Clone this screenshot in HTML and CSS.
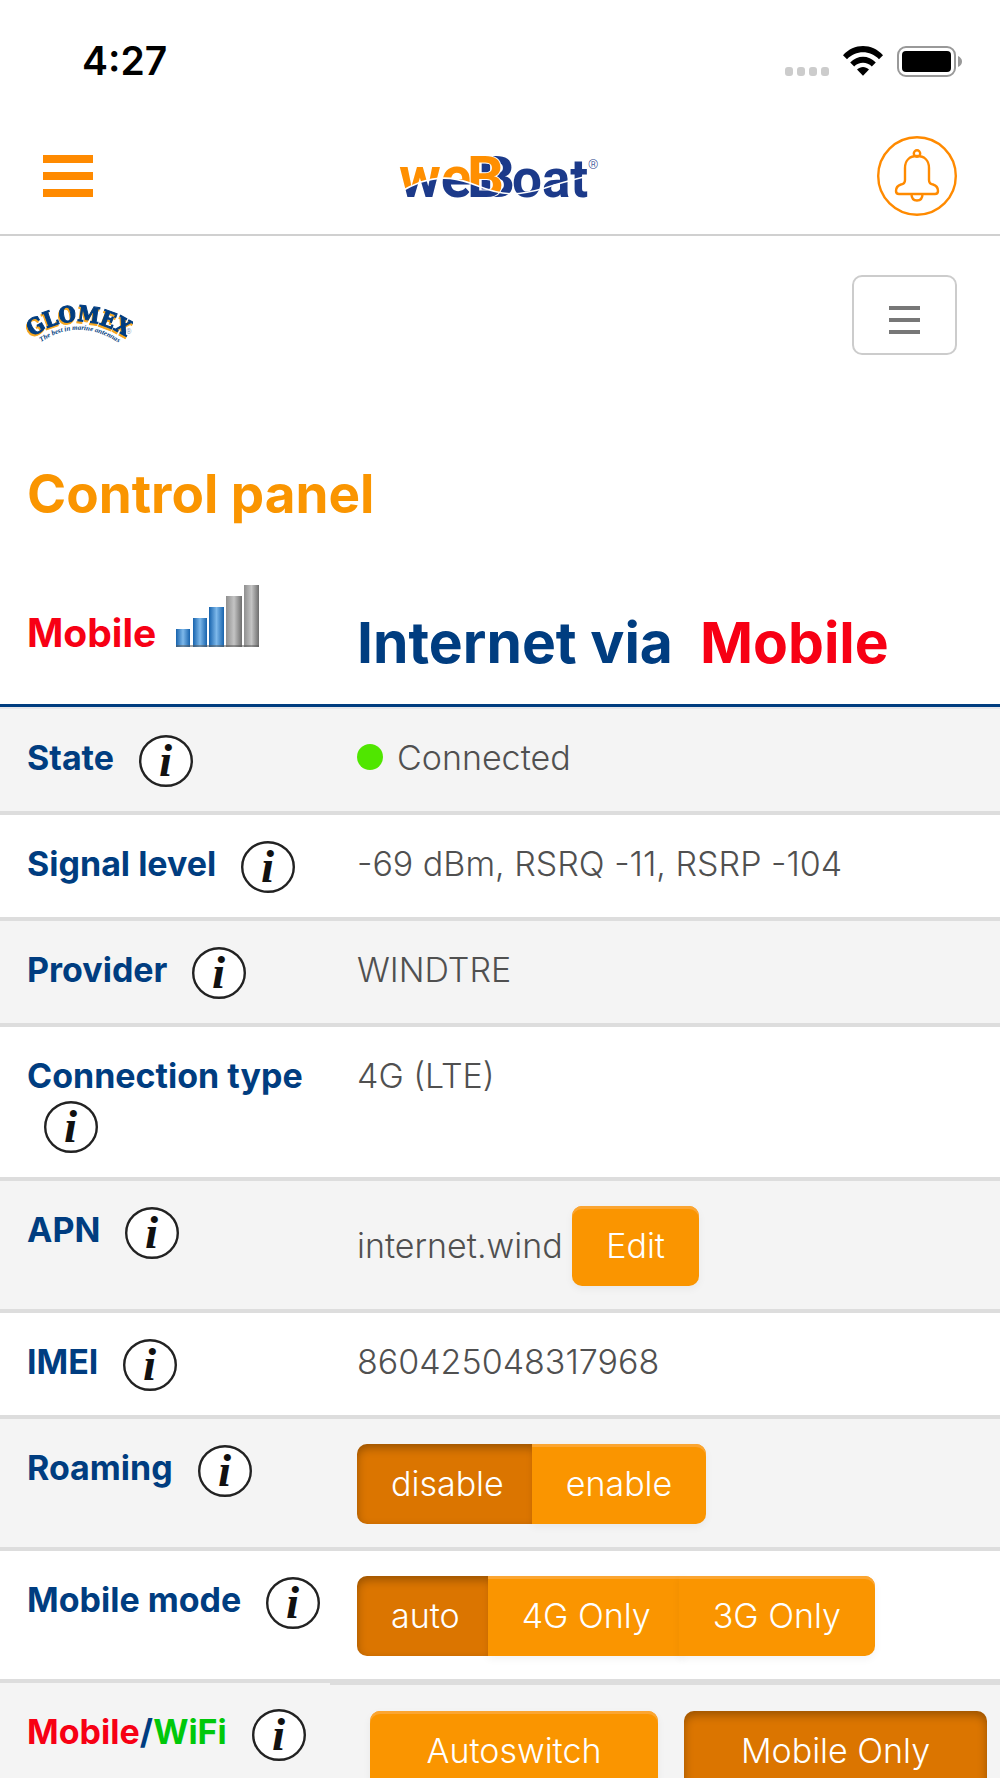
FILE: index.html
```html
<!DOCTYPE html>
<html lang="en">
<head>
<meta charset="utf-8">
<meta name="viewport" content="width=device-width, initial-scale=1">
<title>weBBoat - Control panel</title>
<link rel="stylesheet" href="styles.css">
</head>
<body>
<svg width="0" height="0" class="defs" aria-hidden="true">
  <symbol id="info" viewBox="0 0 54 52">
    <ellipse cx="27" cy="26" rx="25.8" ry="24.8" fill="#fff" stroke="#222" stroke-width="2.4"/>
    <text x="20" y="41" font-family="Liberation Serif, serif" font-size="47" font-weight="700" font-style="italic" fill="#111">i</text>
  </symbol>
</svg>

<div class="status">
  <span class="time">4:27</span>
  <div class="indicators">
    <span class="dots"><i></i><i></i><i></i><i></i></span>
    <svg width="40" height="30" viewBox="0 0 40 30" aria-label="WiFi">
      <path d="M0 9.2C11-3 29-3 40 9.2L36 13.2C27 4 13 4 4 13.2Z"/>
      <path d="M7.2 16.6C14.5 8.800 25.500 8.800 32.800 16.600L28.800 20.600C24 15.600 16 15.600 11.200 20.600Z"/>
      <path d="M14 23.600C17.500 20 22.500 20 26 23.600L20 29.800Z"/>
    </svg>
    <svg width="65" height="31" viewBox="0 0 65 31" aria-label="Battery">
      <rect x="1" y="1" width="57" height="29" rx="8" fill="#fff" stroke="#999" stroke-width="2"/>
      <rect x="5" y="5" width="49" height="21" rx="4"/>
      <path d="M61 10Q65 12 65 15.500Q65 19 61 21Z" fill="#999"/>
    </svg>
  </div>
</div>

<header class="appbar">
  <button class="burger" aria-label="Menu"><i></i><i></i><i></i></button>
  <svg class="logo" width="204" height="52" viewBox="0 0 204 52" aria-label="weBBoat">
    <defs>
      <pattern id="wave" patternUnits="userSpaceOnUse" width="204" height="52">
        <rect width="204" height="52" fill="#1c3a8a"/>
        <path d="M0 0H104V44Q97 42 80 36C60 28 45 25 23 32Q12 36 0 43Z" fill="#ff8f00"/>
      </pattern>
    </defs>
    <g font-family="Roboto, sans-serif" font-weight="700" fill="#1c3a8a">
      <text x="80" y="47" font-size="58">B</text>
      <text x="1" y="47" font-size="57" fill="url(#wave)">we</text>
      <text x="69" y="47" font-size="58" fill="url(#wave)" stroke="#fff" stroke-width="2" paint-order="stroke">B</text>
      <text x="114" y="47" font-size="53">oat</text>
    </g>
    <path d="M0 43Q12 36 23 32C45 25 60 28 80 36C105 46 120 46 147 38Q165 32 190 26" fill="none" stroke="#fff" stroke-width="1.600"/>
    <text x="190" y="19" font-size="13" font-family="Roboto, sans-serif" fill="#1c3a8a">®</text>
  </svg>
  <button class="bell" aria-label="Notifications">
    <svg width="80" height="80" viewBox="0 0 80 80" fill="none" stroke="#ff8a00" stroke-width="2.4">
      <circle cx="40" cy="40" r="38.800"/>
      <circle cx="40" cy="17.500" r="3.200"/>
      <path d="M28 44V32C28 24 33 20 40 20S52 24 52 32V44Q52 48 56 48.500Q61 50 61 55Q61 58 58 58H22Q19 58 19 55Q19 50 24 48.500Q28 48 28 44Z"/>
      <path d="M34.500 58Q34.500 64.500 40 64.500T45.500 58"/>
    </svg>
  </button>
</header>

<main>
  <nav class="brandbar">
    <svg width="108" height="58" viewBox="0 0 108 58" aria-label="Glomex">
      <path id="arc" d="M7 51Q52 20 101 51" fill="none"/>
      <path id="arc2" d="M16 56Q54 31 94 57" fill="none"/>
      <g class="glomex"><text font-family="DejaVu Serif Condensed, DejaVu Serif, serif" font-weight="700" font-size="22" fill="#003d80" stroke="#003d80"><textPath href="#arc">GLOMEX</textPath></text></g>
      <text font-family="Liberation Serif, serif" font-style="italic" font-weight="700" font-size="7" fill="#003d80"><textPath href="#arc2">The best in marine antennas</textPath></text>
      <text x="101" y="48" font-size="7" font-family="Roboto, sans-serif" fill="#6d8fb8">®</text>
    </svg>
    <button class="toggle" aria-label="Toggle navigation"><i></i><i></i><i></i></button>
  </nav>

  <h1>Control panel</h1>

  <table>
    <colgroup><col class="names"><col></colgroup>
    <thead>
      <tr>
        <th scope="col"><span class="red">Mobile</span>
          <svg class="bars" width="83" height="62" viewBox="0 0 83 62" aria-label="Signal 3 of 5">
            <defs>
              <linearGradient id="b"><stop offset="0" stop-color="#1763ad"/><stop offset=".5" stop-color="#7db8ea"/><stop offset="1" stop-color="#1763ad"/></linearGradient>
              <linearGradient id="g"><stop offset="0" stop-color="#8f8f8f"/><stop offset=".5" stop-color="#c4c4c4"/><stop offset="1" stop-color="#6e6e6e"/></linearGradient>
            </defs>
            <path d="M0 44H14V62H0Z" fill="url(#b)"/><path d="M17 33H31V62H17Z" fill="url(#b)"/><path d="M33 22H48V62H33Z" fill="url(#b)"/>
            <path d="M50 11H66V62H50Z" fill="url(#g)"/><path d="M68 0H83V62H68Z" fill="url(#g)"/>
            <path d="M0 60H83V62H0Z" fill="#555" opacity=".5"/>
          </svg>
        </th>
        <th scope="col" class="via">Internet via&nbsp; <span class="red">Mobile</span></th>
      </tr>
    </thead>
    <tbody>
      <tr><th scope="row">State <button class="info" aria-label="About state"><svg><use href="#info"/></svg></button></th>
        <td><span class="dot"></span>Connected</td></tr>
      <tr><th scope="row">Signal level <button class="info" aria-label="About signal level"><svg><use href="#info"/></svg></button></th>
        <td>-69 dBm, RSRQ -11, RSRP -104</td></tr>
      <tr><th scope="row">Provider <button class="info" aria-label="About provider"><svg><use href="#info"/></svg></button></th>
        <td>WINDTRE</td></tr>
      <tr><th scope="row">Connection type <button class="info" aria-label="About connection type"><svg><use href="#info"/></svg></button></th>
        <td>4G (LTE)</td></tr>
      <tr><th scope="row">APN <button class="info" aria-label="About APN"><svg><use href="#info"/></svg></button></th>
        <td class="actions">internet.wind <button class="btn">Edit</button></td></tr>
      <tr><th scope="row">IMEI <button class="info" aria-label="About IMEI"><svg><use href="#info"/></svg></button></th>
        <td>860425048317968</td></tr>
      <tr><th scope="row">Roaming <button class="info" aria-label="About roaming"><svg><use href="#info"/></svg></button></th>
        <td class="actions"><div class="group"><button class="btn active">disable</button><button class="btn">enable</button></div></td></tr>
      <tr><th scope="row">Mobile mode <button class="info" aria-label="About mobile mode"><svg><use href="#info"/></svg></button></th>
        <td class="actions"><div class="group"><button class="btn active">auto</button><button class="btn">4G Only</button><button class="btn">3G Only</button></div></td></tr>
      <tr><th scope="row"><span class="red">Mobile</span>/<span class="green">WiFi</span> <button class="info" aria-label="About mobile and WiFi"><svg><use href="#info"/></svg></button></th>
        <td class="switch"><div class="pair"><button class="btn">Autoswitch</button><button class="btn active">Mobile Only</button></div></td></tr>
    </tbody>
  </table>
</main>
</body>
</html>
```
FILE: styles.css
```css
* { box-sizing: border-box; }

body {
  margin: 0;
  height: 100vh;
  display: flex;
  flex-direction: column;
  background: #fff;
  color: #505050;
  font: 300 34px/48px Inter, sans-serif;
}

button {
  border: 0;
  padding: 0;
  background: none;
  font: inherit;
  cursor: pointer;
}

.defs { position: absolute; }

/* phone status bar */
.status {
  flex: none;
  display: flex;
  justify-content: space-between;
  align-items: center;
  height: 118px;
  padding: 4px 38px 0 82px;
  color: #000;
}
.time { font-size: 39px; font-weight: 600; }
.indicators { display: flex; align-items: center; gap: 14px; }
.dots { display: flex; gap: 4px; padding: 20px 0 0; }
.dots i { width: 8px; height: 9px; border-radius: 3px; background: #ccc; }

/* application header */
.appbar {
  flex: none;
  display: flex;
  justify-content: space-between;
  align-items: center;
  height: 118px;
  padding: 0 43px;
  border-bottom: 2px solid #d0d0d0;
}
.burger { display: flex; flex-direction: column; gap: 9px; width: 50px; }
.burger i { height: 8px; background: #ff8a00; }
.logo { margin-left: 30px; }
.bell { height: 80px; }
.bell svg { display: block; }

main {
  flex: 1;
  min-height: 0;
  overflow-y: auto;
  scrollbar-width: none;
}

.brandbar {
  display: flex;
  justify-content: space-between;
  align-items: center;
  padding: 39px 43px 0 25px;
}
.glomex { filter: drop-shadow(-1px 2px 0 #f5a51d); }
.toggle {
  display: flex;
  flex-direction: column;
  align-items: center;
  justify-content: center;
  gap: 8px;
  width: 105px;
  height: 80px;
  padding-top: 10px;
  border: 2px solid #ccc;
  border-radius: 10px;
}
.toggle i { width: 31px; height: 4px; background: #777; }

h1 {
  margin: 0;
  padding: 105px 27px 53px;
  color: #fa9500;
  font-size: 53px;
  font-weight: 700;
  line-height: 68px;
}

table {
  width: 100%;
  border-collapse: separate;
  border-spacing: 0;
  table-layout: fixed;
}
.names { width: 330px; }
th, td { text-align: left; vertical-align: top; }
th { color: #003d80; font-weight: 700; }

thead th {
  padding: 4px 0 47px 27px;
  border-bottom: 3px solid #003d80;
  font-size: 39px;
}
thead th.via { padding: 26px 0 0 27px; font-size: 57px; line-height: 72px; }
.bars { margin-left: 11px; }
.red { color: #f70014; }
.green { color: #00c80a; }

tbody th { padding: 25px 5px 24px 27px; }
tbody td { padding: 25px 0 24px 27px; }
tbody tr:nth-child(odd) { background: #f4f4f4; }
tbody th, tbody td { border-top: 4px solid #ddd; }
tbody tr:first-child > * { border-top: 2px solid #e6e6ea; }

.info { margin-left: 17px; width: 54px; height: 52px; vertical-align: -17px; }
.info svg { display: block; width: 54px; height: 52px; }

.dot {
  display: inline-block;
  width: 26px;
  height: 26px;
  margin-right: 14px;
  border-radius: 50%;
  background: #50e600;
}

tbody td.actions { padding: 25px 0 23px 27px; }
.group { display: flex; }
.btn {
  height: 80px;
  padding: 0 34px;
  border-radius: 10px;
  background: #fa9500;
  color: #fff;
  line-height: 80px;
  box-shadow: inset 0 3px 0 #fba531, 0 3px 8px rgba(0, 0, 0, .05);
}
.btn.active {
  background: #db7500;
  box-shadow: inset 0 4px 10px rgba(0, 0, 0, .3);
}
.group .btn:not(:first-child) { margin-left: -6px; border-top-left-radius: 0; border-bottom-left-radius: 0; }
.group .btn:not(:last-child) { border-top-right-radius: 0; border-bottom-right-radius: 0; }

tbody tr > td.switch { padding: 26px 13px 23px 40px; border-top-width: 6px; }
.pair { display: grid; grid-template-columns: 288fr 303fr; gap: 26px; }
```
